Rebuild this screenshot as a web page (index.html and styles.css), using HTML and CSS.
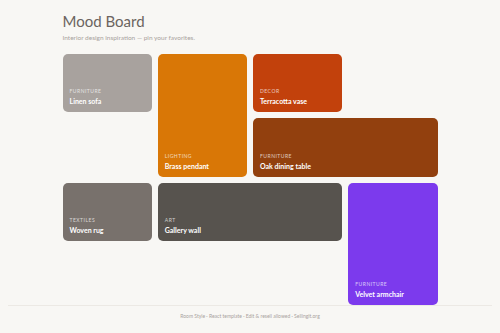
FILE: index.html
```html
<!DOCTYPE html>
<html lang="en">
<head>
<meta charset="utf-8">
<meta name="viewport" content="width=device-width, initial-scale=1.0">
<title>Mood Board</title>
<link rel="stylesheet" href="styles.css">
</head>
<body>
<div class="page">
	<header class="header">
		<h1 class="title">Mood Board</h1>
		<p class="subtitle">Interior design inspiration — pin your favorites.</p>
	</header>

	<div class="board">
		<div class="pin pin_linen">
			<span class="pin_cat">Furniture</span>
			<span class="pin_name">Linen sofa</span>
		</div>
		<div class="pin pin_brass tall">
			<span class="pin_cat">Lighting</span>
			<span class="pin_name">Brass pendant</span>
		</div>
		<div class="pin pin_terracotta">
			<span class="pin_cat">Decor</span>
			<span class="pin_name">Terracotta vase</span>
		</div>
		<div class="pin pin_oak wide">
			<span class="pin_cat">Furniture</span>
			<span class="pin_name">Oak dining table</span>
		</div>
		<div class="pin pin_rug">
			<span class="pin_cat">Textiles</span>
			<span class="pin_name">Woven rug</span>
		</div>
		<div class="pin pin_gallery wide">
			<span class="pin_cat">Art</span>
			<span class="pin_name">Gallery wall</span>
		</div>
		<div class="pin pin_velvet tall">
			<span class="pin_cat">Furniture</span>
			<span class="pin_name">Velvet armchair</span>
		</div>
	</div>
</div>

<footer class="footer">
	Room Style · React template · Edit &amp; resell allowed · Sellingit.org
</footer>
</body>
</html>
```

FILE: styles.css
```css
:root {
	--Bg: #f8f7f4;
	--Gap: 6px;
}

* {
	box-sizing: border-box;
}

body {
	margin: 0;
	padding: 0 8px;
	background: var(--Bg);
	font-family: Lato, "Noto Sans", sans-serif;
	color: #57534e;
}

.page {
	width: 375px;
	margin: 0 auto;
	padding-top: 11px;
}

.title {
	margin: 0;
	font-size: 15px;
	line-height: 20px;
	font-weight: 400;
	color: #6b6460;
}

.subtitle {
	margin: 3px 0 0;
	font-size: 6.5px;
	line-height: 8px;
	color: #a8a29e;
}

.board {
	display: grid;
	grid-template-columns: repeat(4, 1fr);
	grid-auto-rows: 58.25px;
	gap: var(--Gap);
	margin-top: 12px;
}

.pin {
	display: flex;
	flex-direction: column;
	justify-content: flex-end;
	padding: 0 7px 6px;
	border-radius: 5px;
	color: #fff;
}

.tall {
	grid-row: span 2;
}

.wide {
	grid-column: span 2;
}

.pin_cat {
	font-size: 5px;
	line-height: 6px;
	letter-spacing: 0.1em;
	text-transform: uppercase;
	opacity: 0.7;
}

.pin_name {
	margin-top: 3px;
	font-size: 7px;
	line-height: 9px;
	font-weight: 700;
}

.pin_linen { background: #a8a29e; }
.pin_brass { background: #d97706; }
.pin_terracotta { background: #c2410c; }
.pin_oak { background: #92400e; }
.pin_rug { background: #78716c; }
.pin_gallery { background: #57534e; }
.pin_velvet { background: #7c3aed; }

.footer {
	border-top: 1px solid #ece9e4;
	padding-top: 7px;
	text-align: center;
	font-size: 5px;
	line-height: 7px;
	color: #a8a29e;
}
```
